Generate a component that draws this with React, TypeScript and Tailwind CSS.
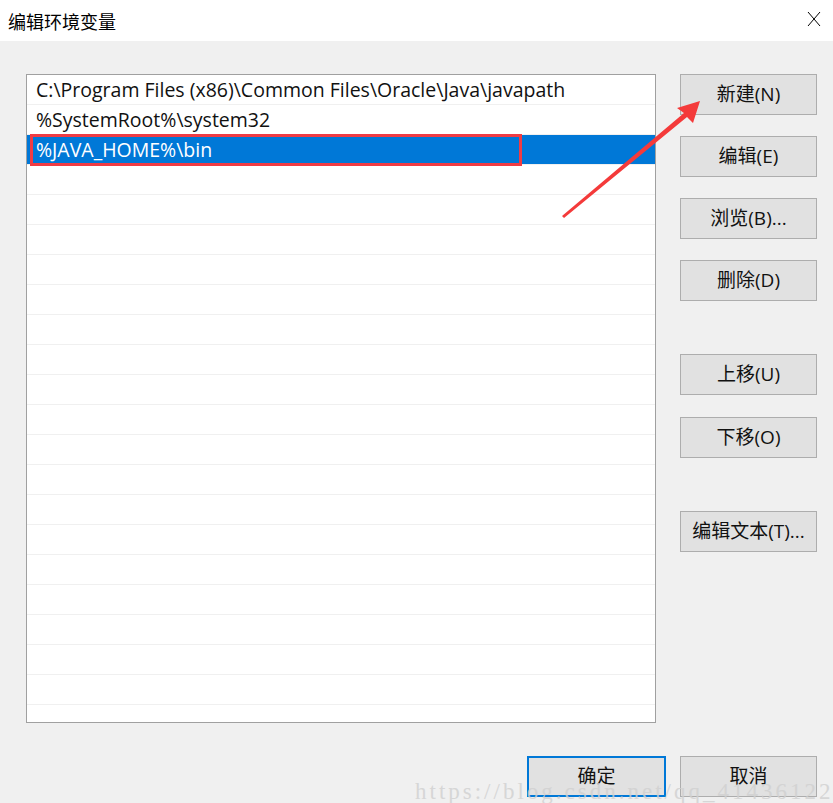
import React from 'react';

const paths = ['C:\\Program Files (x86)\\Common Files\\Oracle\\Java\\javapath', '%SystemRoot%\\system32', '%JAVA_HOME%\\bin'];

const font = { fontFamily: '"Open Sans", "Noto Sans CJK SC", sans-serif' };

const Btn: React.FC<{ label: string; className?: string; primary?: boolean }> = ({ label, className = '', primary }) => (
  <button
    className={`flex h-[41px] w-[137px] items-center justify-center bg-[#e1e1e1] text-[19px] text-[#111] ${
      primary ? 'border-2 border-[#0078d7]' : 'border border-[#adadad]'
    } ${className}`}
  >
    {label}
  </button>
);

export default function App() {
  const rows = Array.from({ length: 22 }, (_, i) => paths[i] ?? '');

  return (
    <div className="relative h-[803px] w-[833px] overflow-hidden bg-[#f0f0f0] text-black" style={font}>
      <div className="flex h-[41px] items-center justify-between bg-white pl-[8px] pr-[12px]">
        <span className="text-[18px] leading-none" style={{ fontFamily: '"Noto Sans CJK SC", sans-serif' }}>
          编辑环境变量
        </span>
        <svg width="14" height="16" viewBox="0 0 14 16" className="mb-[4px]">
          <path d="M1 1 L13 15 M13 1 L1 15" stroke="#000" strokeWidth="1" fill="none" />
        </svg>
      </div>

      <div className="flex pl-[26px] pt-[33px]">
        <div className="h-[649px] w-[630px] overflow-hidden border border-[#a0a0a0] bg-white">
          {rows.map((p, i) => (
            <div key={i} className="relative h-[30px] border-b border-[#f0f0f0]">
              {i === 2 ? (
                <div className="flex h-[29px] items-center bg-[#0078d7] pl-[9px] text-[19.5px] text-white">
                  <div className="absolute left-[3px] top-[-1px] h-[32px] w-[492px] border-[3px] border-[#f03c44]" />
                  {p}
                </div>
              ) : (
                <div className="flex h-[29px] items-center pl-[9px] text-[19.5px] text-[#111]">{p}</div>
              )}
            </div>
          ))}
        </div>

        <div className="ml-[24px] flex flex-col">
          <Btn label="新建(N)" />
          <Btn label="编辑(E)" className="mt-[21px]" />
          <Btn label="浏览(B)..." className="mt-[21px]" />
          <Btn label="删除(D)" className="mt-[21px]" />
          <Btn label="上移(U)" className="mt-[53px]" />
          <Btn label="下移(O)" className="mt-[22px]" />
          <Btn label="编辑文本(T)..." className="mt-[53px]" />
        </div>
      </div>

      <div className="flex justify-end gap-[14px] pr-[16px] pt-[33px]">
        <Btn label="确定" primary className="w-[139px]" />
        <Btn label="取消" />
      </div>

      <svg className="pointer-events-none absolute left-0 top-0" width="833" height="803">
        <polygon points="562,216 684,113 677,108 700,101 693,123 687,117 564,218" fill="#f43a3a" />
      </svg>

      {/* csdn watermark over the bottom buttons */}
      <div
        className="pointer-events-none absolute left-[415px] top-[780px] whitespace-nowrap text-[23px] leading-none tracking-[3px] text-[#d0d0d0] opacity-80"
        style={{ fontFamily: '"Liberation Serif", serif' }}
      >
        https://blog.csdn.net/qq_41436122
      </div>
    </div>
  );
}
